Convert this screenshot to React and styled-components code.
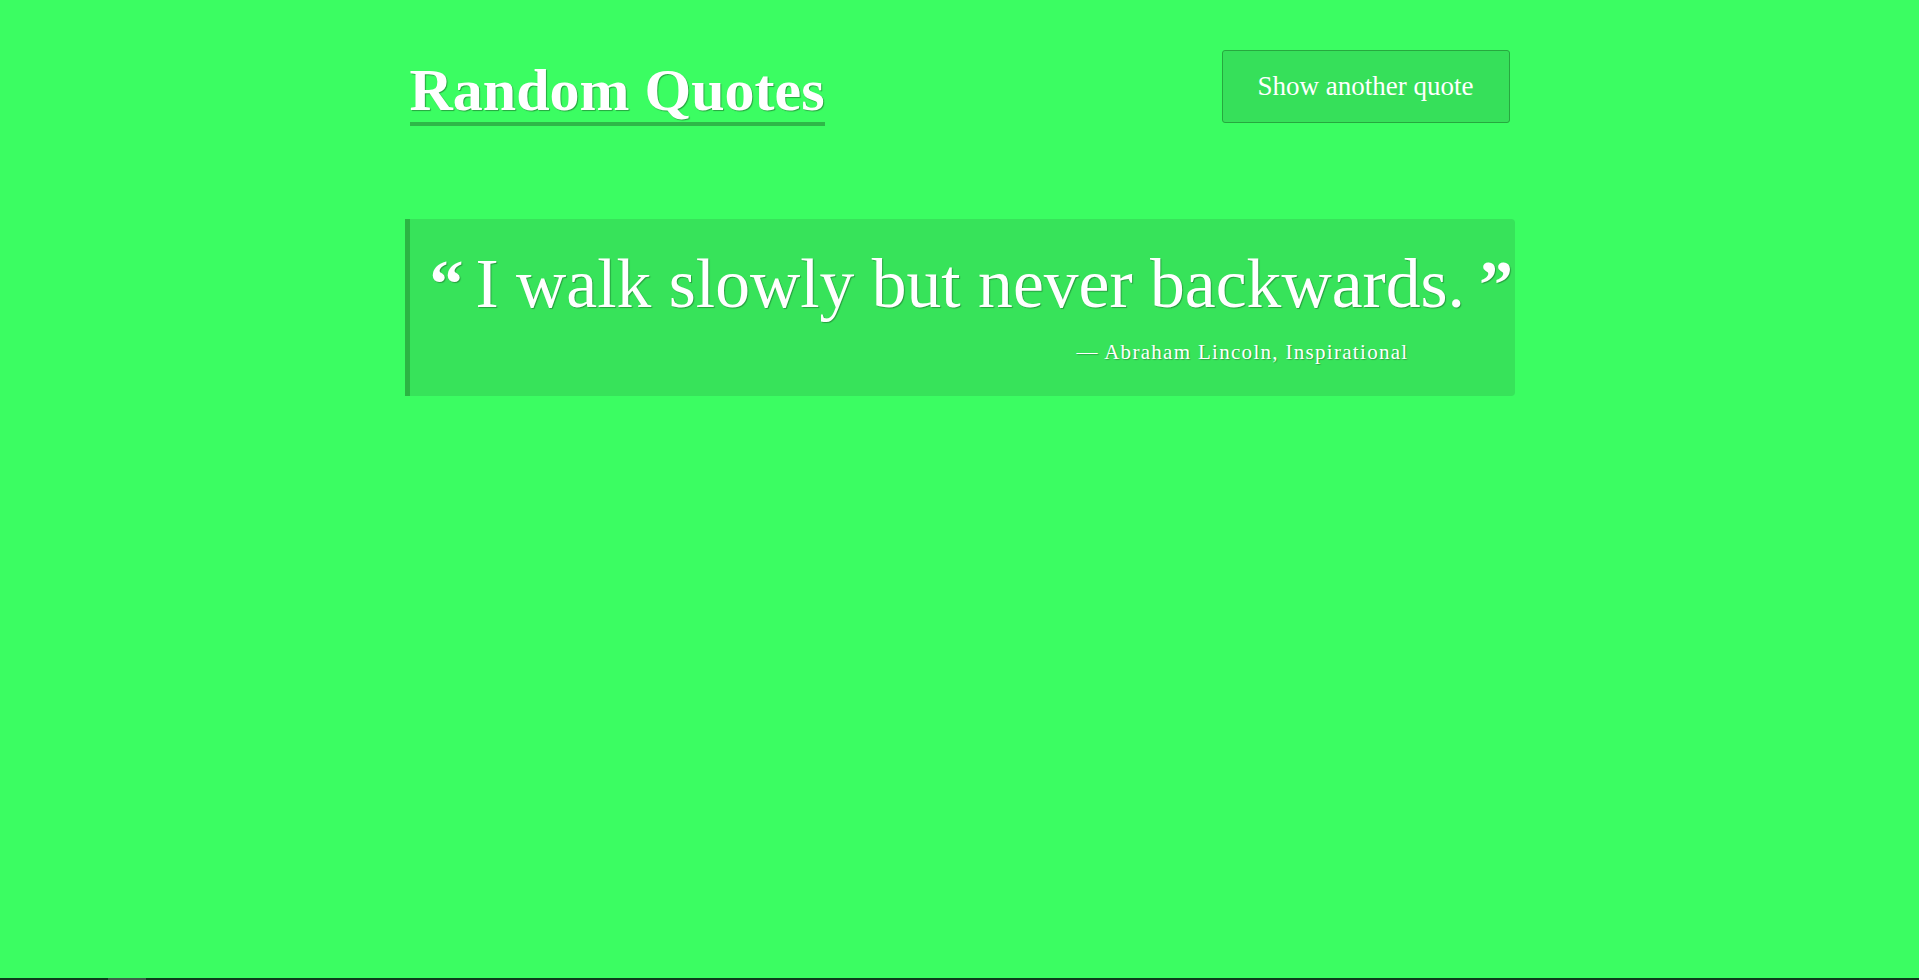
import React from 'react'
import styled, { createGlobalStyle } from 'styled-components'

const quote = {
  text: 'I walk slowly but never backwards.',
  author: 'Abraham Lincoln',
  category: 'Inspirational',
}

const App = () => {
  return (
    <Page>
      <GlobalStyle />
      <Main>
        <Header>
          <Title>Random Quotes</Title>
          <NewQuoteButton type="button">Show another quote</NewQuoteButton>
        </Header>
        <QuoteBox>
          <QuoteText>
            <QuoteMark side="left">&ldquo;</QuoteMark>
            {quote.text}
            <QuoteMark side="right">&rdquo;</QuoteMark>
          </QuoteText>
          <Author>&mdash; {quote.author}, {quote.category}</Author>
        </QuoteBox>
      </Main>
      <BottomBar>
        <BarThumb />
      </BottomBar>
    </Page>
  )
}

const GlobalStyle = createGlobalStyle`
    html, body {
        margin: 0;
        padding: 0;
        background: #3bfd62;
    }

    body {
        font-family: "Liberation Serif", "Times New Roman", serif;
        color: #fff;
    }
`

const Page = styled.div`
    min-height: 100vh;
    display: flex;
    flex-direction: column;
`

const Main = styled.main`
    flex: 1;
    width: 1110px;
    margin: 0 auto;
`

const Header = styled.header`
    display: flex;
    justify-content: space-between;
    align-items: flex-start;
    padding: 50px 5px 0 5px;
`

const Title = styled.h1`
    margin: 8px 0 0 0;
    font-size: 60px;
    line-height: 64px;
    font-weight: 700;
    color: #fff;
    border-bottom: 4px solid #2eb848;
    text-shadow: 1px 1px 1px rgba(0, 0, 0, 0.35);
`

const NewQuoteButton = styled.button`
    width: 288px;
    height: 73px;
    padding: 0;
    background: #36e05a;
    border: 1px solid #27a83f;
    border-radius: 3px;
    color: #fff;
    font-family: inherit;
    font-size: 27px;
    cursor: pointer;
`

const QuoteBox = styled.blockquote`
    margin: 93px 0 0 0;
    padding: 23px 3px 30px 20px;
    background: #37e35a;
    border-left: 5px solid #2bb543;
    border-radius: 0 4px 4px 0;
`

const QuoteText = styled.p`
    margin: 0;
    font-size: 69.6px;
    line-height: 84px;
    white-space: nowrap;
    text-shadow: 1px 1px 1px rgba(0, 0, 0, 0.3);
`

const QuoteMark = styled.span`
    font-weight: 700;
    font-size: 68px;
    margin: ${props => props.side === 'left' ? '0 12px 0 0' : '0 0 0 14px'};
`

const Author = styled.footer`
    margin: 12px 103px 0 0;
    text-align: right;
    font-size: 21px;
    line-height: 28px;
    letter-spacing: 1.3px;
    text-shadow: 1px 1px 1px rgba(0, 0, 0, 0.25);
`

const BottomBar = styled.div`
    height: 2px;
    background: #0e3a1c;
`

const BarThumb = styled.div`
    width: 38px;
    height: 2px;
    margin-left: 108px;
    background: #3f5f4a;
`

export default App
